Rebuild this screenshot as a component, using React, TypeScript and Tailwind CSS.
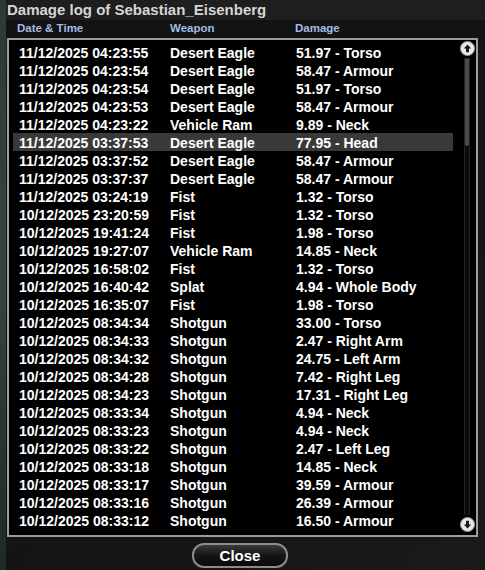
import React from 'react';

type Hit = { time: string; weapon: string; damage: string };

const hits: Hit[] = [
  { time: '11/12/2025 04:23:55', weapon: 'Desert Eagle', damage: '51.97 - Torso' },
  { time: '11/12/2025 04:23:54', weapon: 'Desert Eagle', damage: '58.47 - Armour' },
  { time: '11/12/2025 04:23:54', weapon: 'Desert Eagle', damage: '51.97 - Torso' },
  { time: '11/12/2025 04:23:53', weapon: 'Desert Eagle', damage: '58.47 - Armour' },
  { time: '11/12/2025 04:23:22', weapon: 'Vehicle Ram', damage: '9.89 - Neck' },
  { time: '11/12/2025 03:37:53', weapon: 'Desert Eagle', damage: '77.95 - Head' },
  { time: '11/12/2025 03:37:52', weapon: 'Desert Eagle', damage: '58.47 - Armour' },
  { time: '11/12/2025 03:37:37', weapon: 'Desert Eagle', damage: '58.47 - Armour' },
  { time: '11/12/2025 03:24:19', weapon: 'Fist', damage: '1.32 - Torso' },
  { time: '10/12/2025 23:20:59', weapon: 'Fist', damage: '1.32 - Torso' },
  { time: '10/12/2025 19:41:24', weapon: 'Fist', damage: '1.98 - Torso' },
  { time: '10/12/2025 19:27:07', weapon: 'Vehicle Ram', damage: '14.85 - Neck' },
  { time: '10/12/2025 16:58:02', weapon: 'Fist', damage: '1.32 - Torso' },
  { time: '10/12/2025 16:40:42', weapon: 'Splat', damage: '4.94 - Whole Body' },
  { time: '10/12/2025 16:35:07', weapon: 'Fist', damage: '1.98 - Torso' },
  { time: '10/12/2025 08:34:34', weapon: 'Shotgun', damage: '33.00 - Torso' },
  { time: '10/12/2025 08:34:33', weapon: 'Shotgun', damage: '2.47 - Right Arm' },
  { time: '10/12/2025 08:34:32', weapon: 'Shotgun', damage: '24.75 - Left Arm' },
  { time: '10/12/2025 08:34:28', weapon: 'Shotgun', damage: '7.42 - Right Leg' },
  { time: '10/12/2025 08:34:23', weapon: 'Shotgun', damage: '17.31 - Right Leg' },
  { time: '10/12/2025 08:33:34', weapon: 'Shotgun', damage: '4.94 - Neck' },
  { time: '10/12/2025 08:33:23', weapon: 'Shotgun', damage: '4.94 - Neck' },
  { time: '10/12/2025 08:33:22', weapon: 'Shotgun', damage: '2.47 - Left Leg' },
  { time: '10/12/2025 08:33:18', weapon: 'Shotgun', damage: '14.85 - Neck' },
  { time: '10/12/2025 08:33:17', weapon: 'Shotgun', damage: '39.59 - Armour' },
  { time: '10/12/2025 08:33:16', weapon: 'Shotgun', damage: '26.39 - Armour' },
  { time: '10/12/2025 08:33:12', weapon: 'Shotgun', damage: '16.50 - Armour' },
];

const SELECTED = 5;

function ArrowButton({ down }: { down?: boolean }) {
  return (
    <svg width="15" height="15" viewBox="0 0 15 15">
      <circle cx="7.5" cy="7.5" r="7" fill="#e8e8e8" stroke="#9a9a9a" strokeWidth="1" />
      <path
        d={down ? 'M7.5 11.5 L3.8 7.6 H6 V3.8 H9 V7.6 H11.2 Z' : 'M7.5 3.5 L11.2 7.4 H9 V11.2 H6 V7.4 H3.8 Z'}
        fill="#1a1a1a"
      />
    </svg>
  );
}

export default function App() {
  return (
    <div
      className="w-[485px] h-[570px] overflow-hidden flex bg-[#171717] text-white"
      style={{ fontFamily: '"Liberation Sans", Arial, sans-serif' }}
    >
      <div className="w-[6px] shrink-0 bg-gradient-to-b from-[#2c3b30] via-[#33453a] to-[#1e2a22]" />

      <div className="flex-1 flex flex-col bg-gradient-to-br from-[#1f1f1f] via-[#141414] to-[#1a1a1a]">
        <div className="h-[20px] pl-[1px] flex items-center text-[15px] font-bold text-[#d6d6d6] bg-[#1e1e1e]">
          Damage log of Sebastian_Eisenberg
        </div>

        <div className="h-[18px] pl-[11px] grid grid-cols-[153px_125px_1fr] items-center text-[11.5px] font-bold text-[#a3bbe4] bg-[#131313]">
          <div>Date &amp; Time</div>
          <div>Weapon</div>
          <div>Damage</div>
        </div>

        <div className="ml-[1px] w-[471px] h-[499px] border-2 border-[#9c9c9c] bg-black flex">
          <div className="flex-1 pt-[3px] pl-[4px]">
            {hits.map((h, i) => (
              <div
                key={i}
                className={
                  'h-[18px] w-[440px] pl-[6px] pt-[2px] grid grid-cols-[151px_126px_1fr] items-center text-[14px] font-bold leading-none whitespace-nowrap ' +
                  (i === SELECTED ? 'bg-[#393939]' : '')
                }
              >
                <div>{h.time}</div>
                <div>{h.weapon}</div>
                <div>{h.damage}</div>
              </div>
            ))}
          </div>

          <div className="w-[16px] mr-[1px] flex flex-col items-center pt-[1px] pb-[3px]">
            <ArrowButton />
            <div className="flex-1 w-[6px] my-[2px] bg-[#0c0c0c] border-x border-[#222] flex justify-center">
              <div className="w-[4px] h-[88px] bg-[#4a4a4a] rounded-sm" />
            </div>
            <ArrowButton down />
          </div>
        </div>

        <div className="flex-1 flex items-start pt-[6px] pl-[186px]">
          <button className="w-[96px] h-[25px] rounded-[12px] border-2 border-[#8c8c8c] bg-gradient-to-b from-[#3a3a3a] via-[#151515] to-[#0a0a0a] text-white text-[15px] font-bold leading-none">
            Close
          </button>
        </div>
      </div>
    </div>
  );
}
